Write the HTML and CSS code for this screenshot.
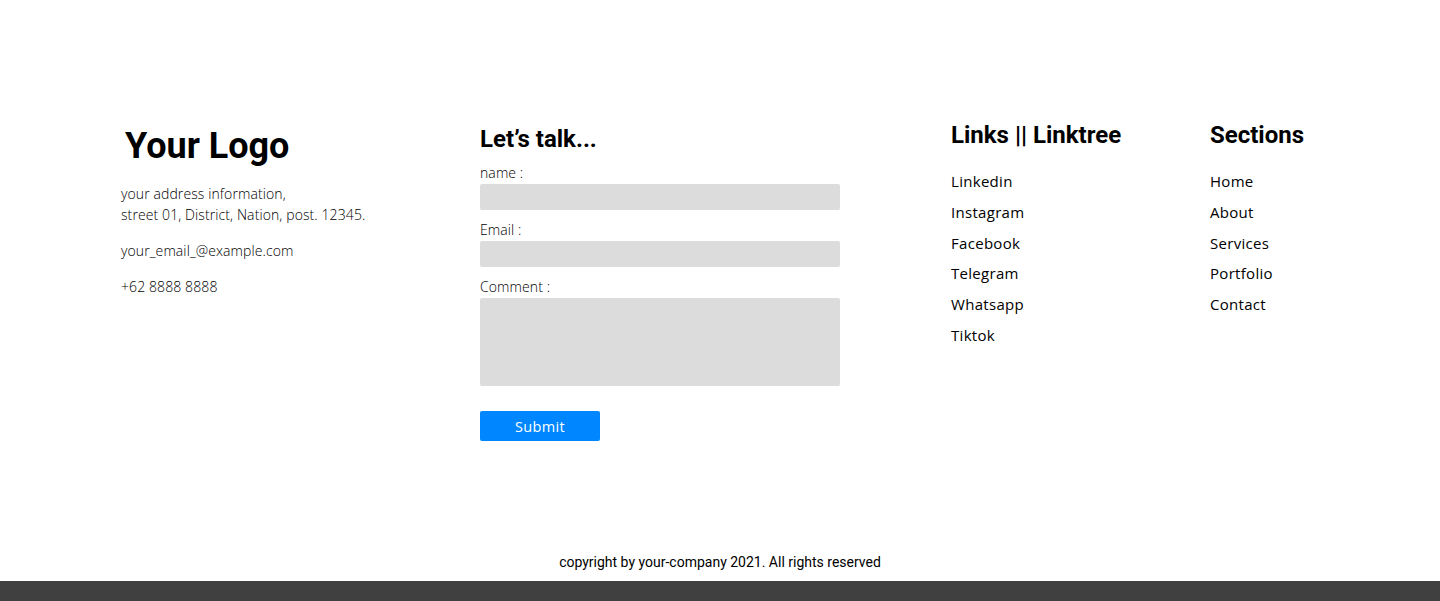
FILE: index.html
```html
<!DOCTYPE html>
<html lang="en">
<head>
<meta charset="utf-8">
<title>Footer</title>
<link rel="stylesheet" href="styles.css">
</head>
<body>
<footer class="footer">
  <div class="footer-main">
    <div class="col col-info">
      <h1 class="logo">Your Logo</h1>
      <p class="info">your address information,<br>street 01, District, Nation, post. 12345.</p>
      <p class="info">your_email_@example.com</p>
      <p class="info">+62 8888 8888</p>
    </div>
    <div class="col col-form">
      <h2 class="form-title">Let’s talk...</h2>
      <form class="form">
        <label class="label">name :</label>
        <div class="field"></div>
        <label class="label">Email :</label>
        <div class="field"></div>
        <label class="label">Comment :</label>
        <div class="field field-area"></div>
        <button type="button" class="submit">Submit</button>
      </form>
    </div>
    <div class="col col-links">
      <h2 class="col-title">Links || Linktree</h2>
      <ul class="list">
        <li>Linkedin</li>
        <li>Instagram</li>
        <li>Facebook</li>
        <li>Telegram</li>
        <li>Whatsapp</li>
        <li>Tiktok</li>
      </ul>
    </div>
    <div class="col col-sections">
      <h2 class="col-title">Sections</h2>
      <ul class="list">
        <li>Home</li>
        <li>About</li>
        <li>Services</li>
        <li>Portfolio</li>
        <li>Contact</li>
      </ul>
    </div>
  </div>
  <p class="copyright">copyright by your-company 2021. All rights reserved</p>
  <div class="bar"></div>
</footer>
</body>
</html>
```
FILE: styles.css
```css
* { box-sizing: border-box; }
html, body { margin: 0; padding: 0; background: #fff; }
body {
  font-family: "Open Sans", "Noto Sans", sans-serif;
  font-weight: 300;
  color: #000;
}
.footer { display: flex; flex-direction: column; }
.footer-main {
  display: flex;
  padding: 121px 0 0 121px;
  height: 441px;
}
.col-info { width: 359px; padding-top: 4px; }
.col-form { width: 471px; padding-top: 4px; }
.col-links { width: 259px; }
.col-sections { flex: 1; }

.logo {
  margin: 0 0 16px;
  padding-left: 4px;
  font-family: Roboto, sans-serif;
  font-weight: 700;
  font-size: 36px;
  line-height: 42px;
}
.info {
  margin: 0 0 15px;
  font-size: 14px;
  line-height: 21px;
  letter-spacing: 0.1px;
  color: #000;
}
.form-title, .col-title {
  margin: 0;
  font-family: Roboto, sans-serif;
  font-weight: 700;
  font-size: 24px;
  line-height: 28px;
}
.form-title { margin-bottom: 9px; }
.col-title { margin-bottom: 22px; }
.form { display: flex; flex-direction: column; width: 360px; }
.label { font-size: 14px; line-height: 21px; letter-spacing: 0.1px; }
.field {
  height: 26px;
  background: #dcdcdc;
  border-radius: 2px;
  margin: 1px 0 9px;
}
.field-area { height: 88px; margin-bottom: 25px; }
.submit {
  width: 120px;
  height: 30px;
  border: 0;
  border-radius: 2px;
  background: #0087ff;
  color: #fff;
  font-family: "Open Sans", "Noto Sans", sans-serif;
  font-weight: 400;
  font-size: 14.5px;
  letter-spacing: 0.3px;
  padding: 0;
}
.list { list-style: none; margin: 0; padding: 0; display: flex; flex-direction: column; gap: 9.8px; }
.list li { font-size: 15px; line-height: 21px; font-weight: 400; letter-spacing: 0.3px; }

.copyright {
  margin: 113px 0 11px;
  text-align: center;
  font-family: Roboto, sans-serif;
  font-weight: 400;
  font-size: 14px;
  line-height: 16px;
  color: #000;
}
.bar { height: 20px; background: #404040; }
```
